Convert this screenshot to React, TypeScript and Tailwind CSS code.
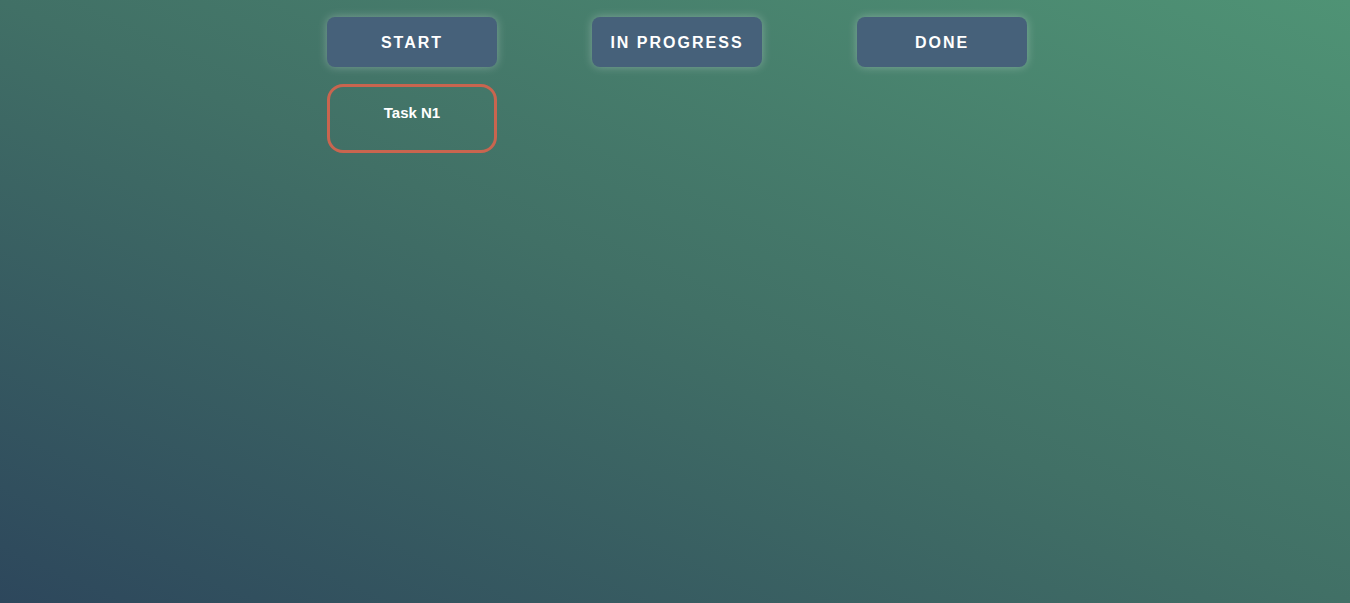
const columns = [
  { title: 'START', tasks: ['Task N1'] },
  { title: 'IN PROGRESS', tasks: [] as string[] },
  { title: 'DONE', tasks: [] as string[] },
]

export default function App() {
  return (
    <div className="min-h-[603px] w-full bg-[linear-gradient(to_top_right,#2d475c_0%,#417066_50%,#4f9375_100%)] font-['Liberation_Sans',Arial,sans-serif]">
      <div className="flex justify-center gap-[95px] pt-[17px] pl-[4px]">
        {columns.map((col) => (
          <div key={col.title} className="flex w-[170px] flex-col gap-[17px]">
            <div className="flex h-[50px] items-center justify-center rounded-lg bg-[#46617a] pt-[2px] text-[16px] font-bold tracking-[2px] text-white shadow-[0_0_10px_rgba(255,255,255,0.3)]">
              {col.title}
            </div>
            {col.tasks.map((task) => (
              <div
                key={task}
                className="h-[69px] rounded-2xl border-[3px] border-[#c9654f] pt-[15px] text-center text-[15px] font-bold text-white"
              >
                {task}
              </div>
            ))}
          </div>
        ))}
      </div>
    </div>
  )
}
